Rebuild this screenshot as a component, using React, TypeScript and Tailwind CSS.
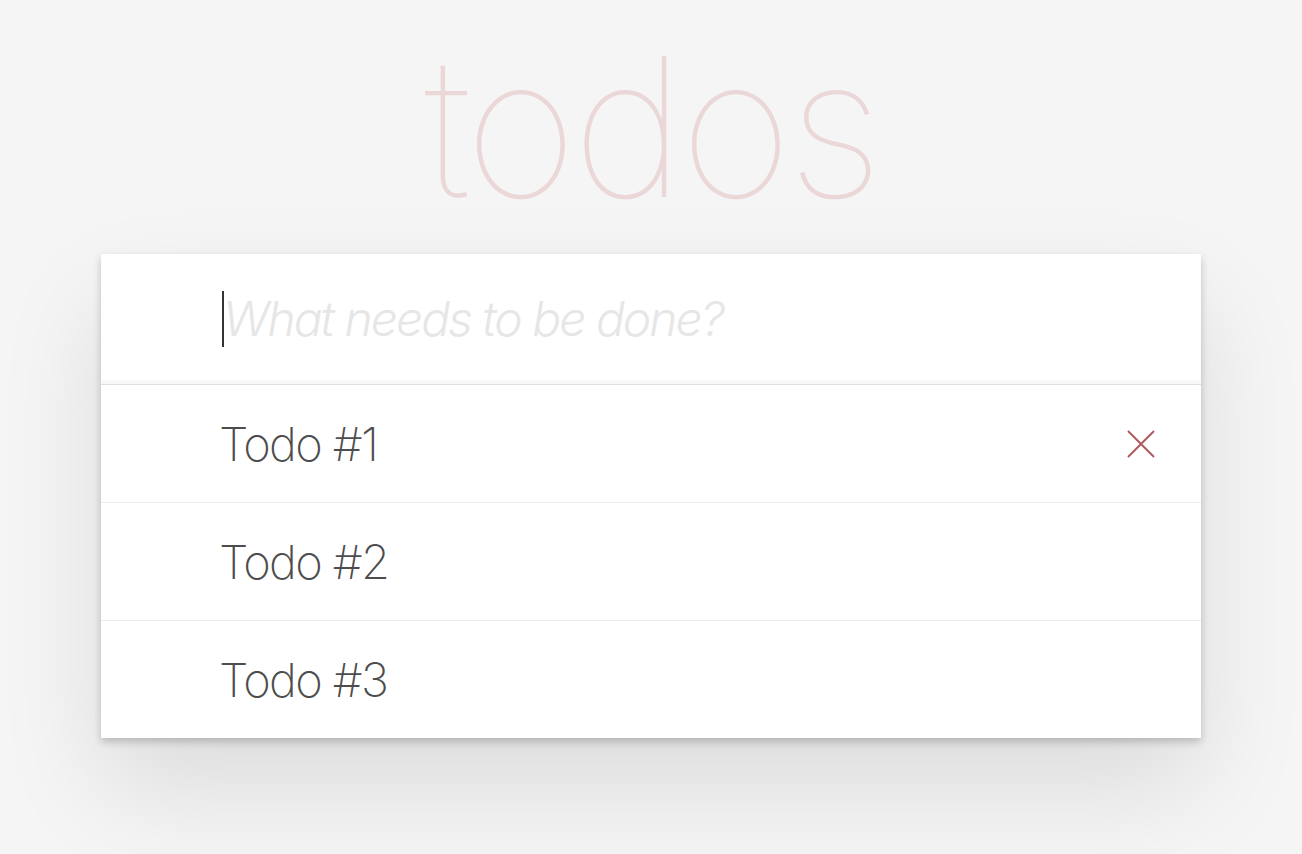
import React from "react";

const font = { fontFamily: '"Helvetica Neue", Inter, Roboto, "Liberation Sans", sans-serif' };

function Row({ text, showX, first }: { text: string; showX?: boolean; first?: boolean }) {
  return (
    <div
      className={
        first
          ? "flex h-[117px] items-center pl-[118px] pr-[46px]"
          : "flex h-[118px] items-center border-t border-[#ededed] pl-[118px] pr-[46px]"
      }
    >
      <span className="flex-1 text-[47px] font-extralight leading-none tracking-[-1.6px] text-[#4d4d4d]">{text}</span>
      {showX && (
        <svg width="28" height="28" viewBox="0 0 28 28">
          <path d="M1 1 L27 27 M27 1 L1 27" stroke="#af5b5e" strokeWidth="2" fill="none" />
        </svg>
      )}
    </div>
  );
}

export default function App() {
  return (
    <div className="min-h-[854px] w-full overflow-hidden bg-[#f5f5f5]" style={font}>
      <div className="flex h-[254px] justify-center">
        <h1 className="mt-[30px] text-[194px] font-thin leading-[194px] tracking-[-5px] text-[#ebd7d7]">todos</h1>
      </div>
      <div className="mx-auto w-[1100px] bg-white shadow-[0_4px_8px_rgba(0,0,0,0.2),0_50px_100px_rgba(0,0,0,0.1)]">
        <div className="flex h-[130px] items-center pl-[121px] shadow-[inset_0_-4px_2px_rgba(0,0,0,0.03)]">
          <span className="mr-[-1px] h-[56px] w-[2px] bg-[#333]" />
          <span className="text-[48px] font-light italic leading-none tracking-[-2px] text-[#e6e6e6]">What needs to be done?</span>
        </div>
        <div className="border-t border-[#e0e0e0]">
          <Row text="Todo #1" showX first />
          <Row text="Todo #2" />
          <Row text="Todo #3" />
        </div>
      </div>
    </div>
  );
}
